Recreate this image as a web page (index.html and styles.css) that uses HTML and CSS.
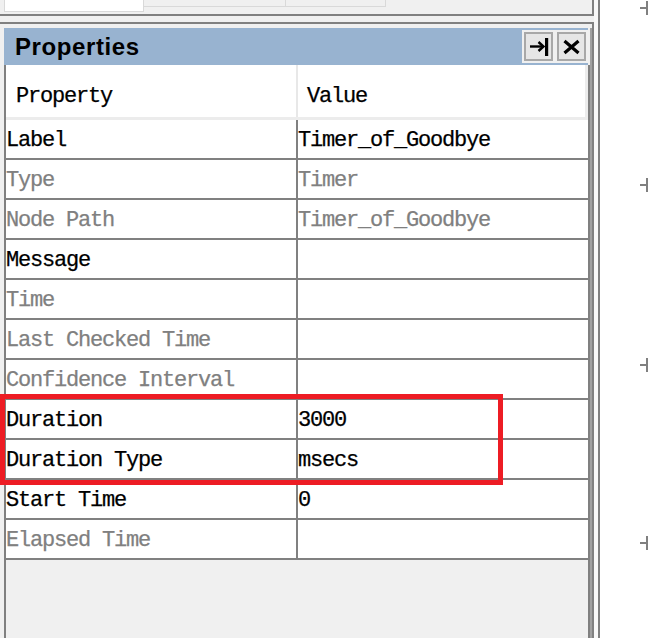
FILE: index.html
```html
<!DOCTYPE html>
<html>
<head>
<meta charset="utf-8">
<link rel="stylesheet" href="styles.css">
</head>
<body>
<div class="screen">
  <div class="main">
    <div class="tabs-box">
      <div class="tabs">
        <div class="tab active"></div>
        <div class="tab"></div>
        <div class="tab"></div>
      </div>
    </div>
    <div class="spacer"></div>
    <div class="dock">
      <div class="dock-inner">
        <div class="titlebar">
          <span class="title">Properties</span>
          <div class="title-buttons">
            <button class="tbtn" aria-label="Pin">
              <svg width="25" height="25" viewBox="0 0 25 25">
                <path d="M4 12.5H17" stroke="#000" stroke-width="2.4" fill="none"/>
                <path d="M12.5 8L17.5 12.5L12.5 17" stroke="#000" stroke-width="2.4" fill="none"/>
                <rect x="19" y="4" width="3.2" height="18" fill="#000"/>
              </svg>
            </button>
            <button class="tbtn" aria-label="Close">
              <svg width="24" height="25" viewBox="0 0 24 25">
                <path d="M4.5 7L18.5 19M18.5 7L4.5 19" stroke="#000" stroke-width="3.2" fill="none"/>
              </svg>
            </button>
          </div>
        </div>
        <div class="grid">
          <div class="head">
            <div class="hcell name">Property</div>
            <div class="hcell val">Value</div>
          </div>
          <div class="row"><div class="cell name">Label</div><div class="cell val">Timer_of_Goodbye</div></div>
          <div class="row ro"><div class="cell name">Type</div><div class="cell val">Timer</div></div>
          <div class="row ro"><div class="cell name">Node Path</div><div class="cell val">Timer_of_Goodbye</div></div>
          <div class="row"><div class="cell name">Message</div><div class="cell val"></div></div>
          <div class="row ro"><div class="cell name">Time</div><div class="cell val"></div></div>
          <div class="row ro"><div class="cell name">Last Checked Time</div><div class="cell val"></div></div>
          <div class="row ro"><div class="cell name">Confidence Interval</div><div class="cell val"></div></div>
          <div class="row"><div class="cell name">Duration</div><div class="cell val">3000</div></div>
          <div class="row"><div class="cell name">Duration Type</div><div class="cell val">msecs</div></div>
          <div class="row"><div class="cell name">Start Time</div><div class="cell val">0</div></div>
          <div class="row ro"><div class="cell name">Elapsed Time</div><div class="cell val"></div></div>
          <div class="empty"></div>
        </div>
      </div>
    </div>
    <div class="highlight"></div>
  </div>
  <div class="gap"></div>
  <div class="vline"></div>
  <div class="canvas">
    <span class="mark m1"></span>
    <span class="mark m2"></span>
    <span class="mark m3"></span>
    <span class="mark m4"></span>
  </div>
</div>
</body>
</html>
```

FILE: styles.css
```css
* { box-sizing: border-box; }
html, body { margin: 0; padding: 0; }
body { background: #fff; width: 648px; height: 638px; overflow: hidden; }

.screen { display: flex; width: 648px; height: 638px; position: relative; }

.main {
  width: 594px;
  height: 638px;
  background: #f0f0f0;
  display: flex;
  flex-direction: column;
}

.tabs-box {
  height: 16px;
  border-bottom: 2px solid #808080;
  border-right: 2px solid #808080;
  flex: none;
}
.tabs { display: flex; padding-left: 4px; align-items: flex-start; }
.tab {
  height: 7px;
  border-right: 1px solid #d9d9d9;
  border-bottom: 1px solid #d9d9d9;
  background: #f0f0f0;
}
.tab:nth-child(2) { width: 142px; }
.tab:nth-child(3) { width: 100px; }
.tab.active {
  width: 140px;
  height: 12px;
  background: #fff;
  border: 1px solid #d9d9d9;
  border-top: none;
}

.spacer { height: 6px; flex: none; }

.dock {
  flex: 1;
  border-top: 2px solid #808080;
  border-right: 2px solid #808080;
  padding: 4px 0 0 4px;
  display: flex;
  flex-direction: column;
  min-height: 0;
}
.dock-inner {
  flex: 1;
  display: flex;
  flex-direction: column;
  border-right: 2px solid #a0a0a0;
  min-height: 0;
}

.titlebar {
  height: 37px;
  flex: none;
  background: #98b3d0;
  margin-right: 2px;
  display: flex;
  align-items: flex-start;
  justify-content: space-between;
  padding-left: 11px;
}
.title {
  font-family: "Liberation Sans", Arial, sans-serif;
  font-weight: bold;
  font-size: 24px;
  letter-spacing: 0.6px;
  line-height: 36px;
  color: #000;
  margin-top: 1px;
}
.title-buttons {
  display: flex;
  gap: 4px;
  background: #f0f0f0;
  padding: 2px;
  margin-top: 2px;
  height: 33px;
}
.tbtn {
  width: 29px;
  height: 29px;
  padding: 0;
  margin: 0;
  background: #e6e6e6;
  border: 2px solid #a8a8a8;
  display: flex;
  align-items: center;
  justify-content: center;
}
.tbtn svg { display: block; }

.grid {
  flex: 1;
  display: flex;
  flex-direction: column;
  border-left: 2px solid #808080;
  border-right: 2px solid #808080;
  background: #f0f0f0;
  font-family: "Liberation Mono", "Courier New", monospace;
  font-size: 22px;
  letter-spacing: -1.2px;
  color: #000;
  -webkit-text-stroke: 0.25px currentColor;
  min-height: 0;
}

.head {
  display: flex;
  height: 55px;
  background: #fff;
  border-bottom: 3px solid #ececec;
  flex: none;
}
.hcell {
  display: flex;
  align-items: center;
  padding-top: 11px;
  white-space: nowrap;
}
.hcell.name { width: 292px; padding-left: 10px; border-right: 2px solid #e8e8e8; }
.hcell.val { flex: 1; padding-left: 9px; border-right: 3px solid #ececec; }

.row {
  display: flex;
  height: 40px;
  background: #fff;
  border-bottom: 2px solid #808080;
  flex: none;
}
.cell {
  display: flex;
  align-items: center;
  white-space: nowrap;
  padding-top: 2px;
}
.cell.name { width: 292px; border-right: 2px solid #808080; }
.cell.val { flex: 1; }
.row.ro .cell { color: #808080; }

.empty { flex: 1; background: #f0f0f0; }

.highlight {
  position: absolute;
  left: 0;
  top: 394px;
  width: 503px;
  height: 91px;
  border: 5px solid #ed1c24;
}

.gap { width: 4px; background: #f8f8f8; flex: none; }
.vline { width: 2px; background: #808080; flex: none; }
.canvas { flex: 1; background: #fff; position: relative; }

.mark {
  position: absolute;
  left: 40px;
  width: 8px;
  height: 14px;
}
.mark::before {
  content: "";
  position: absolute;
  left: 0;
  top: 6px;
  width: 8px;
  height: 2px;
  background: #808080;
}
.mark::after {
  content: "";
  position: absolute;
  left: 6px;
  top: 0;
  width: 2px;
  height: 14px;
  background: #808080;
}
.m1 { top: 1px; }
.m2 { top: 178px; }
.m3 { top: 358px; }
.m4 { top: 536px; }
```
